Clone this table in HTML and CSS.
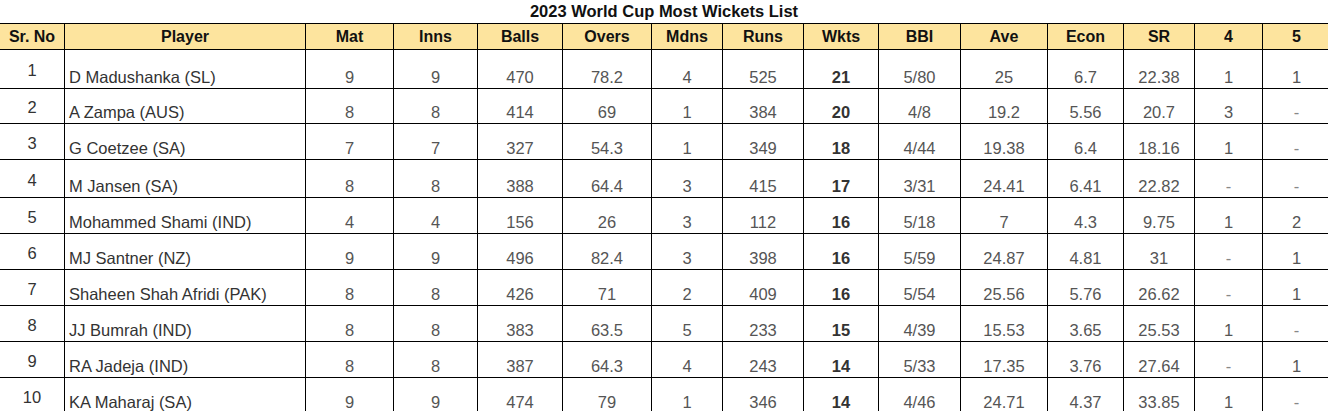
FILE: index.html
```html
<!DOCTYPE html>
<html>
<head>
<meta charset="utf-8">
<link rel="stylesheet" href="styles.css">
</head>
<body>
<div class="page">
  <div class="title">2023 World Cup Most Wickets List</div>
  <table class="stats">
    <colgroup>
      <col class="c-sr"><col class="c-player"><col class="c-mat"><col class="c-inns"><col class="c-balls"><col class="c-overs"><col class="c-mdns"><col class="c-runs"><col class="c-wkts"><col class="c-bbi"><col class="c-ave"><col class="c-econ"><col class="c-sr2"><col class="c-4"><col class="c-5">
    </colgroup>
    <thead>
      <tr><th>Sr. No</th><th>Player</th><th>Mat</th><th>Inns</th><th>Balls</th><th>Overs</th><th>Mdns</th><th>Runs</th><th>Wkts</th><th>BBI</th><th>Ave</th><th>Econ</th><th>SR</th><th>4</th><th>5</th></tr>
    </thead>
    <tbody>
      <tr><td class="sr">1</td><td class="name">D Madushanka (SL)</td><td>9</td><td>9</td><td>470</td><td>78.2</td><td>4</td><td>525</td><td class="wk">21</td><td>5/80</td><td>25</td><td>6.7</td><td>22.38</td><td>1</td><td>1</td></tr>
      <tr><td class="sr">2</td><td class="name">A Zampa (AUS)</td><td>8</td><td>8</td><td>414</td><td>69</td><td>1</td><td>384</td><td class="wk">20</td><td>4/8</td><td>19.2</td><td>5.56</td><td>20.7</td><td>3</td><td class="dash">-</td></tr>
      <tr><td class="sr">3</td><td class="name">G Coetzee (SA)</td><td>7</td><td>7</td><td>327</td><td>54.3</td><td>1</td><td>349</td><td class="wk">18</td><td>4/44</td><td>19.38</td><td>6.4</td><td>18.16</td><td>1</td><td class="dash">-</td></tr>
      <tr><td class="sr">4</td><td class="name">M Jansen (SA)</td><td>8</td><td>8</td><td>388</td><td>64.4</td><td>3</td><td>415</td><td class="wk">17</td><td>3/31</td><td>24.41</td><td>6.41</td><td>22.82</td><td class="dash">-</td><td class="dash">-</td></tr>
      <tr><td class="sr">5</td><td class="name">Mohammed Shami (IND)</td><td>4</td><td>4</td><td>156</td><td>26</td><td>3</td><td>112</td><td class="wk">16</td><td>5/18</td><td>7</td><td>4.3</td><td>9.75</td><td>1</td><td>2</td></tr>
      <tr><td class="sr">6</td><td class="name">MJ Santner (NZ)</td><td>9</td><td>9</td><td>496</td><td>82.4</td><td>3</td><td>398</td><td class="wk">16</td><td>5/59</td><td>24.87</td><td>4.81</td><td>31</td><td class="dash">-</td><td>1</td></tr>
      <tr><td class="sr">7</td><td class="name">Shaheen Shah Afridi (PAK)</td><td>8</td><td>8</td><td>426</td><td>71</td><td>2</td><td>409</td><td class="wk">16</td><td>5/54</td><td>25.56</td><td>5.76</td><td>26.62</td><td class="dash">-</td><td>1</td></tr>
      <tr><td class="sr">8</td><td class="name">JJ Bumrah (IND)</td><td>8</td><td>8</td><td>383</td><td>63.5</td><td>5</td><td>233</td><td class="wk">15</td><td>4/39</td><td>15.53</td><td>3.65</td><td>25.53</td><td>1</td><td class="dash">-</td></tr>
      <tr><td class="sr">9</td><td class="name">RA Jadeja (IND)</td><td>8</td><td>8</td><td>387</td><td>64.3</td><td>4</td><td>243</td><td class="wk">14</td><td>5/33</td><td>17.35</td><td>3.76</td><td>27.64</td><td class="dash">-</td><td>1</td></tr>
      <tr><td class="sr">10</td><td class="name">KA Maharaj (SA)</td><td>9</td><td>9</td><td>474</td><td>79</td><td>1</td><td>346</td><td class="wk">14</td><td>4/46</td><td>24.71</td><td>4.37</td><td>33.85</td><td>1</td><td class="dash">-</td></tr>
    </tbody>
  </table>
</div>
</body>
</html>
```

FILE: styles.css
```css
html, body {
  margin: 0;
  padding: 0;
  background: #ffffff;
}
body {
  width: 1328px;
  height: 411px;
  overflow: hidden;
  font-family: "Liberation Sans", Arial, sans-serif;
}
.page {
  width: 1328px;
}
.title {
  height: 23px;
  line-height: 23px;
  text-align: center;
  font-weight: bold;
  font-size: 16.5px;
  color: #111;
}
.stats {
  border-collapse: collapse;
  table-layout: fixed;
  width: 1331px;
  margin-left: -1px;
}
.c-sr { width: 65px; }
.c-player { width: 241px; }
.c-mat { width: 88px; }
.c-inns { width: 84px; }
.c-balls { width: 85px; }
.c-overs { width: 89px; }
.c-mdns { width: 71px; }
.c-runs { width: 81px; }
.c-wkts { width: 75px; }
.c-bbi { width: 82px; }
.c-ave { width: 87px; }
.c-econ { width: 76px; }
.c-sr2 { width: 71px; }
.c-4 { width: 68px; }
.c-5 { width: 68px; }

.stats th, .stats td {
  border: 1px solid #000;
  padding: 0;
  text-align: center;
  white-space: nowrap;
  overflow: hidden;
}
.stats th {
  background: #fde49e;
  font-weight: bold;
  font-size: 16px;
  color: #111;
  height: 25px;
  line-height: 18px;
  vertical-align: middle;
}
.stats td {
  font-size: 16.5px;
  line-height: 18px;
  color: #555;
  vertical-align: bottom;
  padding-bottom: 2px;
}
.stats td.sr {
  vertical-align: middle;
  color: #333;
  padding-bottom: 0;
  padding-top: 2px;
}
.stats td.name {
  text-align: left;
  padding-left: 4px;
  color: #333;
}
.stats td.wk {
  font-weight: bold;
  color: #333;
}
.stats td.dash {
  color: #888;
}
.stats tbody tr td { height: 33px; }
.stats tbody tr:nth-child(1) td { height: 36px; }
.stats tbody tr:nth-child(2) td { height: 32px; }
.stats tbody tr:nth-child(4) td { height: 35px; }
```
